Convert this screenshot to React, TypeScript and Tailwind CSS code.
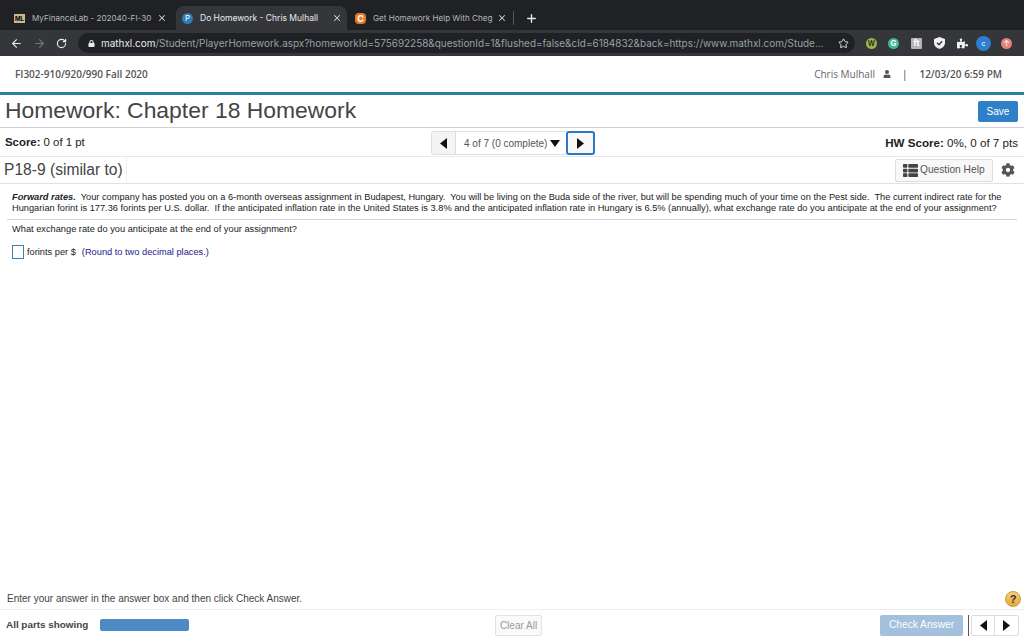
import { Star, ArrowLeft, ArrowRight, RotateCw, X, Plus } from 'lucide-react';
import { FaCog, FaLock, FaPuzzlePiece, FaThList, FaUser } from 'react-icons/fa';

const arial = "font-['Liberation_Sans',Arial,sans-serif]";
const chrome = "font-['Inter','Noto_Sans',sans-serif]";
const course = "font-['Open_Sans','Noto_Sans',sans-serif]";

function TriLeft() {
  return (
    <svg width="7" height="11" viewBox="0 0 7 11"><path d="M7 0v11L0 5.5z" fill="#111" /></svg>
  );
}

function TriRight() {
  return (
    <svg width="7" height="11" viewBox="0 0 7 11"><path d="M0 0v11l7-5.5z" fill="#111" /></svg>
  );
}

function Tab({ active, icon, title, width }: { active?: boolean; icon: React.ReactNode; title: string; width: string }) {
  return (
    <div className={`flex items-center h-[24px] pl-[6px] pr-[5px] rounded-t-lg ${width} ${active ? 'bg-[#35363a] text-[#e8eaed]' : 'text-[#b4b6ba]'}`}>
      {icon}
      <span className={`ml-[7px] flex-1 whitespace-nowrap ${active ? 'text-[8.5px]' : 'text-[8.1px]'}`}>{title}</span>
      <X size={10} className="shrink-0" color="#d0d2d6" strokeWidth={2.5} />
    </div>
  );
}

export default function App() {
  return (
    <div className={`w-[1024px] h-[640px] overflow-hidden bg-white flex flex-col ${arial}`}>
      {/* browser chrome */}
      <div className={`h-[56px] shrink-0 bg-[#202124] flex flex-col ${chrome}`}>
        <div className="h-[30px] flex items-end pl-[8px]">
          <Tab
            title="MyFinanceLab - 202040-FI-30"
            width="w-[164px]"
            icon={<span className="w-[11px] h-[9px] bg-[#c9b98a] text-[6px] leading-[9px] text-black font-bold text-center shrink-0">ML</span>}
          />
          <Tab
            active
            title="Do Homework - Chris Mulhall"
            width="w-[171px] ml-[4px]"
            icon={<span className="w-[11px] h-[11px] rounded-full bg-[#2b7fb8] text-[8px] leading-[11px] text-white text-center shrink-0">P</span>}
          />
          <Tab
            title="Get Homework Help With Cheg"
            width="w-[163px] ml-[2px]"
            icon={<span className="w-[11px] h-[11px] rounded-sm bg-[#e8792b] text-[9px] leading-[11px] text-white font-bold text-center shrink-0">C</span>}
          />
          <div className="w-px h-[14px] bg-[#55575b] mb-[5px] ml-px" />
          <Plus size={13} color="#e8eaed" strokeWidth={2.5} className="ml-[11px] mb-[5px]" />
        </div>
        <div className="h-[26px] bg-[#35363a] flex items-center pl-[10px]">
          <ArrowLeft size={13} color="#e8eaed" />
          <ArrowRight size={13} color="#76787c" className="ml-[10px]" />
          <RotateCw size={11} color="#e8eaed" strokeWidth={2.5} className="ml-[10px]" />
          <div className="ml-[11px] w-[777px] h-[20px] rounded-full bg-[#202124] flex items-center pl-[10px] text-[9.95px] text-[#9aa0a6] whitespace-nowrap">
            <FaLock size={7} color="#e8eaed" />
            <span className="ml-[6px] text-[#e8eaed]">mathxl.com</span>
            <span>/Student/PlayerHomework.aspx?homeworkId=575692258&amp;questionId=1&amp;flushed=false&amp;cId=6184832&amp;back=https://www.mathxl.com/Stude...</span>
            <Star size={11} color="#e8eaed" className="ml-auto mr-[6px] shrink-0" />
          </div>
          <div className="flex items-center ml-[11px]">
            <span className="w-[11px] h-[11px] rounded-full bg-[#9ab547] text-[7px] leading-[11px] text-center text-[#333] font-bold">W</span>
            <span className="ml-[11px] w-[11px] h-[11px] rounded-full bg-[#3fb98f] text-[8px] leading-[11px] text-center text-white font-bold">G</span>
            <span className="ml-[12px] w-[11px] h-[11px] rounded-[1px] bg-[#b5b5b5] text-[8px] leading-[11px] text-center text-white font-bold">ft</span>
            <svg width="11" height="12" viewBox="0 0 11 12" className="ml-[12px]">
              <path d="M5.5 0 11 2v4c0 3-2.4 5-5.5 6C2.4 11 0 9 0 6V2z" fill="#f1f1f1" />
              <path d="m3 5.8 2 2 3-3.6" fill="none" stroke="#35363a" strokeWidth="1.4" />
            </svg>
            <FaPuzzlePiece size={11} color="#f1f1f1" className="ml-[12px]" />
            <span className="ml-[8px] w-[15px] h-[15px] rounded-full bg-[#2f7fd0] text-[7px] leading-[15px] text-center text-white">c</span>
            <span className="ml-[10px] w-[11px] h-[11px] rounded-full bg-[#e5837b] text-[8px] leading-[11px] text-center text-white">↑</span>
          </div>
        </div>
      </div>

      {/* course bar */}
      <div className={`h-[36px] shrink-0 flex items-center pl-[15px] pr-[22px] text-[#555] ${course}`}>
        <span className="text-[10px] font-semibold">FI302-910/920/990 Fall 2020</span>
        <span className="ml-auto text-[10px] text-[#666]">Chris Mulhall</span>
        <FaUser size={8} color="#555" className="ml-[8px]" />
        <span className="ml-[11px] text-[10px] text-[#333]">|</span>
        <span className="ml-[12px] text-[10px] font-semibold">12/03/20 6:59 PM</span>
      </div>
      <div className="h-[3px] shrink-0 bg-[#2e7ea4]" />

      {/* title */}
      <div className="h-[33px] shrink-0 flex items-center pl-[5px] pr-[6px] border-b border-[#cfcfd6]">
        <h1 className="text-[22.9px] text-[#444] leading-none mb-[2px]">Homework: Chapter 18 Homework</h1>
        <button className="ml-auto w-[40px] h-[21px] bg-[#2f80c8] rounded-[2px] text-white text-[10px]">Save</button>
      </div>

      {/* score row */}
      <div className="h-[29px] shrink-0 relative flex items-center pl-[5px] pr-[6px] pt-[2px] border-b border-[#e8e8ee] text-[11.4px] text-[#222]">
        <span><b>Score:</b> 0 of 1 pt</span>
        <div className="absolute left-[431px] top-[3px] flex h-[24px]">
          <div className="w-[25px] flex items-center justify-center bg-[#f4f4f4] border border-[#ddd] rounded-l-[3px]"><TriLeft /></div>
          <div className="w-[110px] flex items-center pl-[8px] border-y border-[#ddd] text-[10px] text-[#555] whitespace-nowrap">
            4 of 7 (0 complete)
            <svg width="10" height="7" viewBox="0 0 10 7" className="ml-[3px] shrink-0"><path d="M0 0h10L5 7z" fill="#111" /></svg>
          </div>
          <div className="w-[29px] flex items-center justify-center border-2 border-[#2b78c4] rounded-[3px] bg-[#f8f8f8]"><TriRight /></div>
        </div>
        <span className="ml-auto text-[11.6px]"><b>HW Score:</b> 0%, 0 of 7 pts</span>
      </div>

      {/* question title */}
      <div className="h-[27px] shrink-0 flex items-center pr-[9px] border-b border-[#e0e0e6]">
        <div className="h-full w-[127px] flex items-center pl-[4px] border-r border-[#f0f0f0] text-[15.6px] text-[#444]">P18-9 (similar to)</div>
        <button className="ml-auto mr-px w-[98px] h-[23px] flex items-center pl-[7px] border border-[#ddd] rounded-[2px] bg-[#f8f8f8] text-[10.2px] text-[#555] whitespace-nowrap">
          <FaThList size={15} color="#444" className="mr-[2px] shrink-0" />
          Question Help
        </button>
        <FaCog size={14} color="#555" className="ml-[7px]" />
      </div>

      {/* question body */}
      <div className="flex-1 pt-[8px] text-[9.25px] leading-[11px] text-[#222]">
        <div className="mx-[7px] px-[5px] pb-[5px] border-b border-[#c9d3dd] whitespace-nowrap">
          <p><b><i>Forward rates.</i></b>&nbsp; Your company has posted you on a 6-month overseas assignment in Budapest, Hungary.&nbsp; You will be living on the Buda side of the river, but will be spending much of your time on the Pest side.&nbsp; The current indirect rate for the</p>
          <p>Hungarian forint is 177.36 forints per U.S. dollar.&nbsp; If the anticipated inflation rate in the United States is 3.8% and the anticipated inflation rate in Hungary is 6.5% (annually), what exchange rate do you anticipate at the end of your assignment?</p>
        </div>
        <p className="pl-[12px] mt-[4px]">What exchange rate do you anticipate at the end of your assignment?</p>
        <div className="flex items-center pl-[12px] mt-[10px]">
          <span className="w-[12px] h-[14px] border border-[#3a82a8] bg-white" />
          <span className="ml-[3px]">forints per $</span>
          <span className="ml-[6px] text-[#1a1a8c]">(Round to two decimal places.)</span>
        </div>
      </div>

      {/* footer */}
      <div className="h-[22px] shrink-0 flex items-center pl-[7px] pr-[3px] border-b border-[#eee] text-[10px] text-[#444]">
        <span>Enter your answer in the answer box and then click Check Answer.</span>
        <span className="ml-auto w-[16px] h-[16px] rounded-full bg-gradient-to-b from-[#f5cf7a] to-[#e5a83c] border border-[#c99a3a] text-[11px] leading-[14px] text-center font-bold text-[#333]">?</span>
      </div>
      <div className="h-[30px] shrink-0 flex items-center pl-[6px] pr-[5px]">
        <span className="w-[94px] text-[9.9px] font-bold text-[#444]">All parts showing</span>
        <div className="w-[89px] h-[12px] rounded-[2px] bg-[#4d8ac6]" />
        <button className="ml-[306px] w-[47px] h-[21px] border border-[#e2e2e2] rounded-[2px] bg-[#fafafa] text-[10px] text-[#999]">Clear All</button>
        <button className="ml-auto w-[83px] h-[21px] rounded-[2px] bg-[#a3c0dc] text-white text-[10.2px]">Check Answer</button>
        <div className="w-px h-[21px] bg-[#555] ml-[5px]" />
        <div className="flex h-[21px] ml-[2px] border border-[#ddd] rounded-[2px]">
          <div className="w-[23px] flex items-center justify-center border-r border-[#ddd]"><TriLeft /></div>
          <div className="w-[23px] flex items-center justify-center"><TriRight /></div>
        </div>
      </div>
    </div>
  );
}
